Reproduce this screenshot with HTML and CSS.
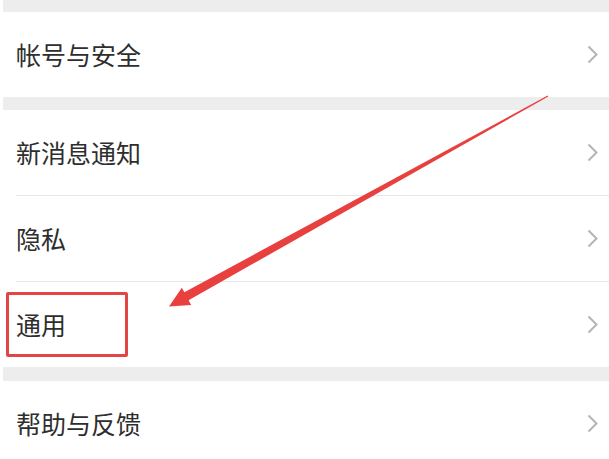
FILE: index.html
```html
<!DOCTYPE html>
<html lang="zh-CN">
<head>
<meta charset="utf-8">
<title>设置</title>
<link rel="stylesheet" href="styles.css">
</head>
<body>
<div class="screen">
  <div class="band band-top"></div>
  <div class="group">
    <div class="row"><span class="label">帐号与安全</span><svg class="chev" width="11" height="19" viewBox="0 0 11 19"><polyline points="1.5,1.5 9.5,9.5 1.5,17.5" fill="none" stroke="#b5b5b5" stroke-width="2"/></svg></div>
  </div>
  <div class="band band-mid"></div>
  <div class="group">
    <div class="row"><span class="label">新消息通知</span><svg class="chev" width="11" height="19" viewBox="0 0 11 19"><polyline points="1.5,1.5 9.5,9.5 1.5,17.5" fill="none" stroke="#b5b5b5" stroke-width="2"/></svg></div>
    <div class="row divided"><span class="label">隐私</span><svg class="chev" width="11" height="19" viewBox="0 0 11 19"><polyline points="1.5,1.5 9.5,9.5 1.5,17.5" fill="none" stroke="#b5b5b5" stroke-width="2"/></svg></div>
    <div class="row divided"><span class="label">通用</span><svg class="chev" width="11" height="19" viewBox="0 0 11 19"><polyline points="1.5,1.5 9.5,9.5 1.5,17.5" fill="none" stroke="#b5b5b5" stroke-width="2"/></svg></div>
  </div>
  <div class="band band-low"></div>
  <div class="group">
    <div class="row"><span class="label">帮助与反馈</span><svg class="chev" width="11" height="19" viewBox="0 0 11 19"><polyline points="1.5,1.5 9.5,9.5 1.5,17.5" fill="none" stroke="#b5b5b5" stroke-width="2"/></svg></div>
  </div>
</div>
<div class="highlight"></div>
<svg class="arrow" width="609" height="459" viewBox="0 0 609 459">
  <polygon points="548.3,96.5 188.6,300.3 191.2,305 169,306.5 181.8,287.8 184.4,292.3 547.7,95.5" fill="#e8403f"/>
</svg>
</body>
</html>
```
FILE: styles.css
```css
html, body {
  margin: 0;
  padding: 0;
  background: #ffffff;
}
body {
  width: 609px;
  height: 459px;
  overflow: hidden;
  position: relative;
  font-family: "Noto Sans CJK SC", "Noto Sans", sans-serif;
}
.screen {
  margin-left: 3px;
  display: flex;
  flex-direction: column;
}
.band {
  background: #ededed;
}
.band-top { height: 12px; }
.band-mid { height: 13px; }
.band-low { height: 14px; }
.group {
  background: #ffffff;
  display: flex;
  flex-direction: column;
}
.row {
  height: 85px;
  display: flex;
  align-items: center;
  justify-content: space-between;
  padding: 0 11px 0 13px;
  position: relative;
}
.row.divided {
  border-top: 1px solid #e6e6e6;
  margin-left: 13px;
  padding-left: 0;
}
.label {
  font-size: 25px;
  color: #2e2e2e;
  line-height: 1;
}
.chev {
  display: block;
}
.highlight {
  position: absolute;
  left: 6px;
  top: 292px;
  width: 116px;
  height: 59px;
  border: 3px solid #e34545;
  border-radius: 2px;
}
.arrow {
  position: absolute;
  left: 0;
  top: 0;
}
```
